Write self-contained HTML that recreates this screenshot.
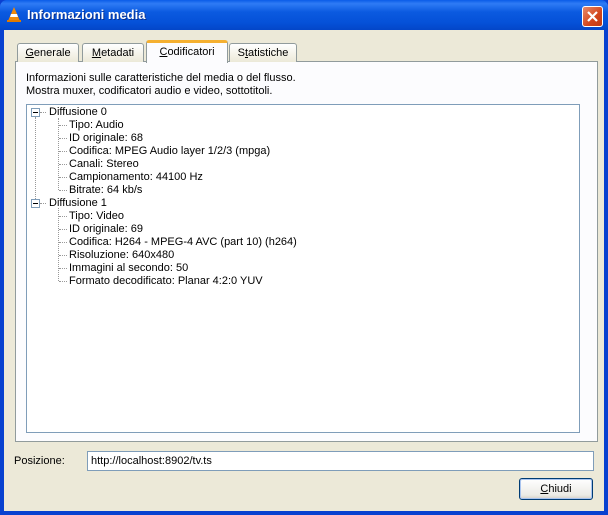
<!DOCTYPE html>
<html><head><meta charset="utf-8"><style>
*{margin:0;padding:0;box-sizing:border-box}
body{width:608px;height:515px;overflow:hidden;font:11px "Liberation Sans",sans-serif;color:#000;background:#0a3fd0;position:relative}
.a{position:absolute}
#title{left:0;top:0;width:608px;height:30px;background:linear-gradient(#0a5ce8 0%,#2f7bf5 12%,#0b5ae0 40%,#0551d8 75%,#0346c8 100%);border-radius:7px 7px 0 0}
#title span{position:absolute;left:27px;top:7px;color:#fff;font-weight:bold;font-size:13px;text-shadow:1px 1px #0b2f8a}
#close{left:582px;top:6px;width:21px;height:21px;border:1px solid #fff;border-radius:3px;background:linear-gradient(135deg,#e88a6a,#d2451c 60%,#c03a14)}
#client{left:4px;top:30px;width:600px;height:481px;background:#ece9d8}
.tab{position:absolute;top:43px;height:19px;background:linear-gradient(#fff,#ece9d8);border:1px solid #919b9c;border-bottom:none;border-radius:3px 3px 0 0;text-align:center;padding-top:3px}
#panel{left:15px;top:61px;width:583px;height:381px;background:#fcfcfe;border:1px solid #919b9c}
#tree{left:26px;top:104px;width:554px;height:329px;background:#fff;border:1px solid #7f9db9}
.r{position:absolute;white-space:nowrap;line-height:13px}
.box{position:absolute;width:9px;height:9px;border:1px solid #7f9db9;background:#fff}
.box:after{content:"";position:absolute;left:1px;top:3px;width:5px;height:1px;background:#000}
.vl{position:absolute;border-left:1px dotted #999;width:0}
.hl{position:absolute;border-top:1px dotted #999;height:0}
</style></head><body>
<div id="title" class="a"><svg class="a" style="left:6px;top:6px" width="16" height="17"><polygon points="8,1 14,15 2,15" fill="#f08a0c"/><polygon points="5,8 11,8 12,11 4,11" fill="#fff"/><rect x="1" y="14" width="14" height="2" fill="#e07a00"/></svg><span>Informazioni media</span></div>
<div id="close" class="a"><svg width="19" height="19"><path d="M5 5L14 14M14 5L5 14" stroke="#fff" stroke-width="2.2"/></svg></div>
<div id="client" class="a"></div>
<div class="a" style="left:0;top:30px;width:4px;height:485px;background:#0841d0"></div>
<div class="a" style="left:604px;top:30px;width:4px;height:485px;background:#0841d0"></div>
<div class="a" style="left:0;top:511px;width:608px;height:4px;background:#0841d0"></div>
<div id="panel" class="a"></div>
<div class="tab" style="left:17px;width:62px"><u>G</u>enerale</div>
<div class="tab" style="left:82px;width:62px"><u>M</u>etadati</div>
<div class="tab" style="left:146px;width:82px;top:40px;height:23px;background:#fcfcfe;border-top:3px solid #f5b030;padding-top:3px;z-index:2"><u>C</u>odificatori</div>
<div class="tab" style="left:229px;width:68px">S<u>t</u>atistiche</div>
<div class="r" style="left:26px;top:72px">Informazioni sulle caratteristiche del media o del flusso.</div>
<div class="r" style="left:26px;top:85px">Mostra muxer, codificatori audio e video, sottotitoli.</div>
<div id="tree" class="a"></div>
<div class="vl" style="left:35px;top:117px;height:86px"></div>
<div class="vl" style="left:58px;top:118px;height:72px"></div>
<div class="vl" style="left:58px;top:208px;height:73px"></div>
<div class="box" style="left:31px;top:108px"></div>
<div class="box" style="left:31px;top:199px"></div>
<div class="hl" style="left:40px;top:112px;width:6px"></div>
<div class="hl" style="left:40px;top:203px;width:6px"></div>
<div class="r" style="left:49px;top:106px">Diffusione 0</div>
<div class="r" style="left:49px;top:197px">Diffusione 1</div>
<div class="hl" style="left:59px;top:125px;width:8px"></div><div class="r" style="left:69px;top:119px">Tipo: Audio</div>
<div class="hl" style="left:59px;top:138px;width:8px"></div><div class="r" style="left:69px;top:132px">ID originale: 68</div>
<div class="hl" style="left:59px;top:151px;width:8px"></div><div class="r" style="left:69px;top:145px">Codifica: MPEG Audio layer 1/2/3 (mpga)</div>
<div class="hl" style="left:59px;top:164px;width:8px"></div><div class="r" style="left:69px;top:158px">Canali: Stereo</div>
<div class="hl" style="left:59px;top:177px;width:8px"></div><div class="r" style="left:69px;top:171px">Campionamento: 44100 Hz</div>
<div class="hl" style="left:59px;top:190px;width:8px"></div><div class="r" style="left:69px;top:184px">Bitrate: 64 kb/s</div>
<div class="hl" style="left:59px;top:216px;width:8px"></div><div class="r" style="left:69px;top:210px">Tipo: Video</div>
<div class="hl" style="left:59px;top:229px;width:8px"></div><div class="r" style="left:69px;top:223px">ID originale: 69</div>
<div class="hl" style="left:59px;top:242px;width:8px"></div><div class="r" style="left:69px;top:236px">Codifica: H264 - MPEG-4 AVC (part 10) (h264)</div>
<div class="hl" style="left:59px;top:255px;width:8px"></div><div class="r" style="left:69px;top:249px">Risoluzione: 640x480</div>
<div class="hl" style="left:59px;top:268px;width:8px"></div><div class="r" style="left:69px;top:262px">Immagini al secondo: 50</div>
<div class="hl" style="left:59px;top:281px;width:8px"></div><div class="r" style="left:69px;top:275px">Formato decodificato: Planar 4:2:0 YUV</div>
<div class="r" style="left:14px;top:455px">Posizione:</div>
<div class="a" style="left:87px;top:451px;width:507px;height:20px;background:#fff;border:1px solid #7f9db9;padding:3px 0 0 3px">http://localhost:8902/tv.ts</div>
<div class="a" style="left:519px;top:478px;width:74px;height:22px;border:1px solid #003c74;border-radius:3px;background:linear-gradient(#fff,#ecebe6 80%,#d6d0c5);box-shadow:inset 0 0 0 1px #a9c4ef;text-align:center;padding-top:4px"><u>C</u>hiudi</div>
</body></html>
